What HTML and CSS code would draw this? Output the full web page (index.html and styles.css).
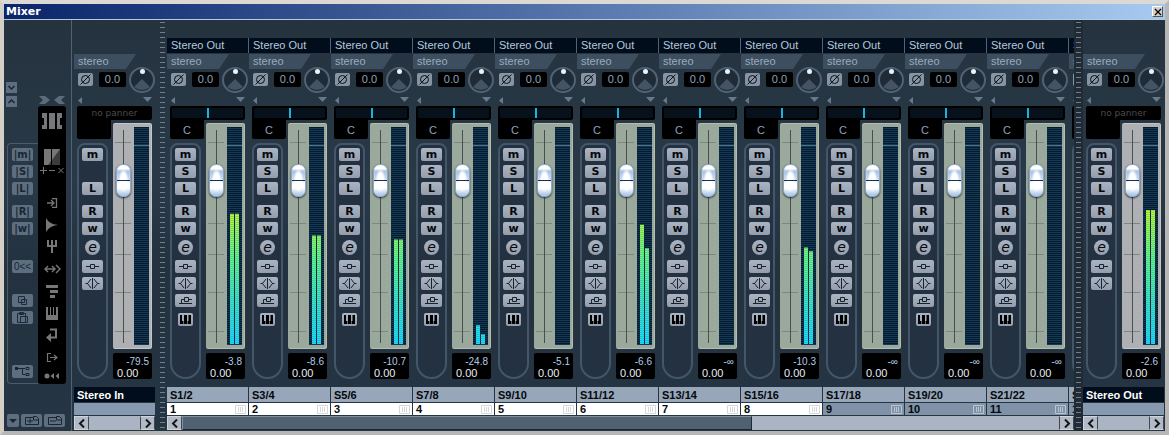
FILE: index.html
```html
<!DOCTYPE html>
<html lang="en">
<head>
    <meta charset="UTF-8">
    <meta name="viewport" content="width=device-width, initial-scale=1.0">
    <title>Mixer</title>
    <link rel="stylesheet" href="styles.css">
</head>
<body>
    <!-- Shared icons -->
    <svg class="icon-defs" aria-hidden="true">
        <symbol id="i-phase" viewBox="0 0 15 13"><circle cx="7.500" cy="6.500" r="4" fill="none" stroke="currentColor"/><path d="M2.500 11.500L12.500 1.500" stroke="currentColor"/></symbol>
        <symbol id="i-insert" viewBox="0 0 21 13"><path d="M4 6.500h4.500m4 0H17M8.500 4.500h4v4h-4z" fill="none" stroke="currentColor"/></symbol>
        <symbol id="i-eq" viewBox="0 0 21 13"><path d="M3.500 6.500h2.500m9 0h2.500M10.500 1v11M9 2L5.500 6.500L9 11M12 2l3.500 4.500L12 11" fill="none" stroke="currentColor"/></symbol>
        <symbol id="i-send" viewBox="0 0 21 13"><path d="M4 9.500h13M6.500 9V5.500H9m4 0h4M9.500 3.500h4v4h-4z" fill="none" stroke="currentColor"/></symbol>
        <symbol id="i-keys" viewBox="0 0 15 13"><path d="M2 2h2v6h2V2h3v6h1V2h3v9H2z" fill="#000"/><path d="M5.500 8v3M9.500 8v3" stroke="#a3adbb" stroke-width=".6"/><path d="M4 2h1.500v6H4zM9 2h1.500v6H9z" fill="#a3adbb"/></symbol>
        <symbol id="i-grid" viewBox="0 0 11 9"><path d="M.5 .5h10v8H.5zM3.500 2v5M5.500 2v5M7.500 2v5" fill="none" stroke="currentColor"/></symbol>
        <symbol id="i-left" viewBox="0 0 8 9"><path d="M6 .5L2 4.500L6 8.500" fill="none" stroke="currentColor" stroke-width="2"/></symbol>
        <symbol id="i-right" viewBox="0 0 8 9"><path d="M2 .5L6 4.500L2 8.500" fill="none" stroke="currentColor" stroke-width="2"/></symbol>
    </svg>

    <div class="window">
        <header class="titlebar">
            <h1>Mixer</h1>
            <button class="close" aria-label="Close"><svg width="8" height="8" viewBox="0 0 8 8"><path d="M1 1l6 6M7 1L1 7" stroke="#000" stroke-width="1.200"/></svg></button>
        </header>

        <main class="mixer">
            <!-- Common panel -->
            <aside class="common">
                <div class="common-main">
                    <div class="common-left">
                        <button class="mini" aria-label="Collapse"><svg width="11" height="11" viewBox="0 0 11 11"><path d="M2.500 4l3 3l3-3" fill="none" stroke="#1a2530" stroke-width="1.500"/></svg></button>
                        <button class="mini" aria-label="Expand"><svg width="11" height="11" viewBox="0 0 11 11"><path d="M2.500 7l3-3l3 3" fill="none" stroke="#1a2530" stroke-width="1.500"/></svg></button>
                        <div class="global">
                            <button class="dim">|m|</button>
                            <button class="dim">|S|</button>
                            <button class="dim">|L|</button>
                            <button class="dim gap-m">|R|</button>
                            <button class="dim">|w|</button>
                            <button class="dim reset gap-xl">0&lt;&lt;</button>
                            <button class="dim gap-l" aria-label="Copy"><svg width="21" height="13" viewBox="0 0 21 13"><path d="M6.500 2.500h6v6h-6zM9.500 5.500h5v5h-5z" fill="#5c6e80" stroke="#1e2a36"/></svg></button>
                            <button class="dim" aria-label="Paste"><svg width="21" height="13" viewBox="0 0 21 13"><path d="M5.500 2.500h8v9h-8zM7.500 1.500h4v2h-4zM8.500 5.500h7v6h-7z" fill="#5c6e80" stroke="#1e2a36"/></svg></button>
                            <button class="dim gap-route" aria-label="Routing"><svg width="21" height="13" viewBox="0 0 21 13"><path d="M4 3.500h9M10.500 3.500v6h3M14 2.500h3v2h-3zM14 8.500h3v2h-3z" fill="none" stroke="#1a2530"/><path d="M3 2h3v3H3z" fill="#1a2530"/></svg></button>
                        </div>
                    </div>
                    <div class="common-right">
                        <svg class="chevrons" width="28" height="8" viewBox="0 0 28 8"><path d="M1 0h6l5 4l-5 4H1l4-4zM27 0h-6l-5 4l5 4h6l-4-4z" fill="#5d6c7b"/></svg>
                        <nav class="views">
                            <button aria-label="Channels"><svg width="22" height="16" viewBox="0 0 22 16"><path d="M1 0h5v16H1v-4h2V5H1zM8 0h6v16H8zM16 0h5v5h-2v7h2v4h-5z" fill="#77777a"/></svg></button>
                            <button class="split" aria-label="Meter view"><svg width="16" height="16" viewBox="0 0 16 16"><path d="M0 0h7v16H0zM8 0h8v16H8z" fill="#3c3c3c"/><path d="M0 0h7v12l-3 4H0zM8 0h8L8 11z" fill="#777"/></svg></button>
                            <button class="short" aria-label="Strip size"><svg width="24" height="8" viewBox="0 0 24 8"><path d="M0 4.500h7M3.500 1v7M9 4.500h6M18.500 2l5 5M23.500 2l-5 5" stroke="#77777a"/></svg></button>
                            <button class="gap-views" aria-label="Input"><svg width="12" height="10" viewBox="0 0 12 10"><path d="M1 5h6M5 2l3 3l-3 3M6 .5h4.500v9H6" fill="none" stroke="#77777a" stroke-width="1.300"/></svg></button>
                            <button aria-label="Inserts"><svg width="14" height="14" viewBox="0 0 14 14"><path d="M1 0q3 6 12 7q-9 1-12 7z" fill="#77777a"/></svg></button>
                            <button aria-label="Equalizer"><svg width="12" height="14" viewBox="0 0 12 14"><path d="M1 0h2v5h2V0h2v5h2V0h2v7H7v6H5V7H1z" fill="#77777a"/></svg></button>
                            <button aria-label="Sends"><svg width="17" height="10" viewBox="0 0 17 10"><path d="M1 5h10M4 2L1 5l3 3M8 2l3 3l-3 3M12 1l4 4l-4 4" fill="none" stroke="#77777a" stroke-width="1.400"/></svg></button>
                            <button aria-label="Overview"><svg width="13" height="13" viewBox="0 0 13 13"><path d="M0 0h12v3H0zM4 5h8v3H4zM4 10h5v3H4z" fill="#77777a"/></svg></button>
                            <button aria-label="Instrument"><svg width="12" height="13" viewBox="0 0 12 13"><path d="M0 0h2v8h2V0h1v8h2V0h1v8h2V0h2v13H0z" fill="#77777a"/></svg></button>
                            <button aria-label="Return"><svg width="12" height="14" viewBox="0 0 12 14"><path d="M4 1.500h6v8H4" fill="none" stroke="#77777a" stroke-width="2"/><path d="M5 5v9L0 9.500z" fill="#77777a"/></svg></button>
                            <button aria-label="Output"><svg width="12" height="9" viewBox="0 0 12 9"><path d="M5 .5H1.500v8H5M4 4.500h7M8 2l3 2.500L8 7" fill="none" stroke="#77777a" stroke-width="1.200"/></svg></button>
                            <button class="low" aria-label="Rewind"><svg width="16" height="6" viewBox="0 0 16 6"><circle cx="3" cy="3" r="2.500" fill="#77777a"/><path d="M10 0v6L6.500 3zM15 0v6l-3.500-3z" fill="#77777a"/></svg></button>
                        </nav>
                    </div>
                </div>
                <div class="common-foot">
                    <button class="dim presets" aria-label="Presets"><svg width="12" height="13" viewBox="0 0 12 13"><path d="M2 5h8l-4 4z" fill="#1a2530"/></svg></button>
                    <button class="dim" aria-label="Store view"><svg width="21" height="13" viewBox="0 0 21 13"><path d="M4.500 3.500h8v-1h3l2 2v6h-13zM12.500 3v3h5M6 7h6M9 4.500v5" fill="none" stroke="#1a2530"/></svg></button>
                    <button class="dim" aria-label="Remove view"><svg width="21" height="13" viewBox="0 0 21 13"><path d="M4.500 3.500h8v-1h3l2 2v6h-13zM12.500 3v3h5M6 7h6" fill="none" stroke="#1a2530"/></svg></button>
                </div>
            </aside>

            <section class="bank bus" id="inputs" aria-label="Inputs"></section>
            <div class="divider"></div>
            <section class="bank channels" id="channels" aria-label="Channels"></section>
            <div class="divider wide"></div>
            <section class="bank bus" id="outputs" aria-label="Outputs"></section>
        </main>
    </div>
    <script src="mixer.js"></script>
</body>
</html>
```
FILE: styles.css
```css
* {
    box-sizing: border-box;
}

body {
    margin: 0;
    background: #25323f;
    font-family: "Liberation Sans", Arial, sans-serif;
    font-size: 11px;
    color: #a9bbcf;
    overflow: hidden;
}

button, input, select {
    margin: 0;
    padding: 0;
    border: 0;
    font: inherit;
    color: inherit;
}

svg {
    display: block;
    flex: none;
}

.icon-defs {
    display: none;
}

/* Window frame */
.window {
    display: flex;
    flex-direction: column;
    min-height: 100vh;
    border: 4px solid #d4d0c8;
    border-top-color: #dcd8d4;
    border-right-color: #b8b6b4;
    border-bottom-color: #b8b6b4;
}

.titlebar {
    display: flex;
    align-items: center;
    justify-content: space-between;
    height: 16px;
    padding: 0 2px;
    background: linear-gradient(90deg, #0a246a, #a6caf0);
    border-bottom: 1px solid #b4cbe4;
}

.titlebar h1 {
    margin: 0;
    font: bold 11px/15px "DejaVu Sans", Verdana, sans-serif;
    color: #fff;
}

.close {
    display: grid;
    place-items: center;
    width: 11px;
    height: 11px;
    background: #d4d0c8;
    border: 1px solid #fff;
    border-right-color: #555;
    border-bottom-color: #555;
}

.mixer {
    flex: 1;
    display: flex;
    background: linear-gradient(#25333f, #293947 40%, #243240 60%, #263543);
}

/* Common panel */
.common {
    display: flex;
    flex-direction: column;
    width: 68px;
    padding: 0 5px 4px 2px;
    border-right: 1px solid #526272;
}

.common-main {
    flex: 1;
    display: flex;
    padding-bottom: 30px;
}

.common-left {
    flex: 1;
    display: flex;
    flex-direction: column;
    gap: 3px;
    padding-top: 62px;
}

.mini {
    width: 11px;
    height: 11px;
    background: #5c6e80;
}

.global {
    flex: 1;
    display: flex;
    flex-direction: column;
    gap: 4px;
    margin: 33px 0 0 1px;
    padding: 4px;
    border: 1px solid #4a5b6c;
    border-right: 0;
    border-radius: 4px 0 0 4px;
}

.dim {
    width: 21px;
    height: 13px;
    background: #5c6e80;
    border-radius: 2px;
    color: #1a2632;
    font: bold 10px/13px "DejaVu Sans", Verdana, sans-serif;
}

.dim.reset {
    font: 10px/13px "Liberation Sans", Arial, sans-serif;
}

.gap-m {
    margin-top: 6px;
}

.gap-l {
    margin-top: 17px;
}

.gap-xl {
    margin-top: 21px;
}

.gap-route {
    margin-top: 37px;
}

.common-right {
    width: 28px;
    display: flex;
    flex-direction: column;
    gap: 2px;
    padding-top: 76px;
}

.views {
    flex: 1;
    padding-top: 4px;
    background: #000;
    border-radius: 3px;
}

.views button {
    display: grid;
    place-items: center;
    width: 28px;
    height: 22px;
    background: none;
}

.views .split {
    margin-top: 14px;
}

.views .short {
    height: 8px;
    margin-top: -2px;
}

.views .gap-views {
    margin-top: 18px;
}

.views .low {
    height: 16px;
}

.common-foot {
    display: flex;
    gap: 2px;
    padding-left: 1px;
}

.common-foot .presets {
    width: 12px;
}

/* Dividers with tick marks */
.divider {
    width: 8px;
    padding: 2px 2px 0 1px;
    margin-left: 4px;
}

.divider::before {
    content: "";
    display: block;
    height: 100%;
    background: repeating-linear-gradient(#6f7f8e 0 1px, transparent 1px 5px);
}

.divider.wide {
    width: 9px;
    margin: 0;
    padding: 2px 2px 0;
    background: #202b36;
}

/* Banks of strips */
.bank {
    display: flex;
    flex-direction: column;
}

.bus {
    width: 81px;
    flex: none;
}

#inputs {
    margin-left: 2px;
}

#outputs {
    margin-right: 1px;
}

.channels {
    flex: 1;
    min-width: 0;
}

.strips {
    flex: 1;
    display: flex;
    gap: 1px;
    overflow: hidden;
}

.strip {
    flex: none;
    width: 81px;
    display: flex;
    flex-direction: column;
    padding-top: 18px;
}

.route {
    appearance: none;
    height: 15px;
    padding-left: 4px;
    border-radius: 0;
    color: #b5cadf;
    line-height: 15px;
}

.channels .route {
    background: #020d1b;
    box-shadow: 1px 0 #536373;
}

/* Input section */
.input {
    display: grid;
    grid-template-columns: 55px 26px;
    grid-template-rows: 13px 26px;
    margin-top: 1px;
}

.tab {
    grid-area: 1 / 1 / 2 / 3;
    width: 62px;
    height: 15px;
    padding-left: 4px;
    line-height: 15px;
    background: #3d4e5e;
    clip-path: polygon(0 0, 100% 0, 84% 100%, 0 100%);
    color: #9aacc0;
}

.gain {
    display: flex;
    align-items: center;
    gap: 6px;
    padding: 0 0 2px 4px;
}

.phase {
    width: 15px;
    height: 13px;
    background: #8794a3;
    border-radius: 2px;
    color: #0a1118;
}

.gain input {
    width: 27px;
    height: 15px;
    background: #000;
    border-radius: 2px;
    text-align: center;
    color: #8fa4bc;
}

.knob {
    grid-area: 2 / 2;
    z-index: 1;
}

.arrows {
    display: flex;
    justify-content: space-between;
    height: 6px;
    margin: 4px 3px 3px 4px;
}

/* Panner */
.panner {
    display: flex;
    align-items: center;
    justify-content: center;
    height: 14px;
    margin: 0 3px;
    background: #000;
    border-radius: 2px 2px 2px 0;
    font: 9px/14px "DejaVu Sans", Verdana, sans-serif;
    color: #4c4d4f;
}

.pan-field {
    flex: 1;
    height: 10px;
    margin: 0 2px;
    background: linear-gradient(#19b4d8, #19b4d8) center / 2px 10px no-repeat #07111c;
}

.lower {
    flex: 1;
    display: grid;
    grid-template-columns: 36px 39px;
    padding: 0 3px 8px;
}

.left-col, .right-col {
    display: flex;
    flex-direction: column;
}

.pan-value {
    width: 34px;
    height: 19px;
    background: #000;
    border-radius: 0 0 2px 2px;
    text-align: center;
    line-height: 20px;
    color: #8ea3bc;
}

.capsule {
    flex: 1;
    display: flex;
    flex-direction: column;
    align-items: center;
    gap: 4px;
    width: 31px;
    margin-top: 4px;
    padding-top: 3px;
    border: 2px solid #43566a;
    border-radius: 8px 8px 16px 16px;
    background: #233140;
}

.key {
    width: 21px;
    height: 13px;
    background: linear-gradient(#aab4c2, #939dab);
    border-radius: 2px;
    color: #05080c;
    font: bold 11px/12px "DejaVu Sans", Verdana, sans-serif;
}

.key.empty {
    visibility: hidden;
}

.key.read {
    margin-top: 6px;
}

.key.icon {
    color: #18222d;
}

.key.edit {
    width: 15px;
    height: 15px;
    margin: 1px 0;
    border-radius: 50%;
    font: italic 14px/13px "DejaVu Sans", Verdana, sans-serif;
}

.key.midi {
    width: 15px;
    margin-top: 2px;
}

/* Fader and meter */
.right-col {
    padding-top: 3px;
    gap: 4px;
}

.fader-panel {
    flex: 1;
    display: flex;
    justify-content: space-between;
    padding: 4px 3px 4px 2px;
    border-radius: 2px;
    background:
        linear-gradient(#7b887d, #7b887d) 2px 19px / 16px 1px no-repeat,
        linear-gradient(#7b887d, #7b887d) 2px 100px / 16px 1px no-repeat,
        linear-gradient(#7b887d, #7b887d) 2px 131px / 16px 1px no-repeat,
        linear-gradient(#7b887d, #7b887d) 2px 169px / 16px 1px no-repeat,
        linear-gradient(#7b887d, #7b887d) 2px 208px / 16px 1px no-repeat,
        #9ba99d;
    box-shadow: inset -1px -1px #b3bdb2, inset 0 1px #b3bdb2;
}

.bus .fader-panel {
    background-color: #aeb0b3;
    box-shadow: inset -1px -1px #c4c6c8, inset 0 1px #c4c6c8;
}

.fader {
    appearance: none;
    writing-mode: vertical-lr;
    direction: rtl;
    width: 17px;
    height: 213px;
    margin-top: 3px;
    background: linear-gradient(#46504c, #46504c) center / 1px 100% no-repeat;
}

.fader::-webkit-slider-thumb {
    appearance: none;
    width: 15px;
    height: 33px;
    border: 1px solid #8ea6c4;
    border-radius: 7px;
    background:
        linear-gradient(#14304e, #14304e) 0 15px / 100% 1px no-repeat,
        radial-gradient(5px 12px at 50% 50%, #fff 60%, #fff0),
        linear-gradient(#fff 0 12%, #a9c3e4 20%, #c9dcf2 45%, #fff 60% 74%, #b4cdea 94%);
    box-shadow: 0 1px 2px #26303a;
}

.meter {
    display: flex;
    gap: 1px;
    justify-content: center;
    width: 15px;
    background:
        linear-gradient(#4d7288, #4d7288) 0 18px / 100% 1px no-repeat,
        repeating-linear-gradient(#071a2c 0 1px, #123a58 1px 2px);
}

.bar {
    width: 4px;
    margin-bottom: 1px;
    clip-path: inset(calc(100% - var(--level)) 0 0 0);
    background:
        repeating-linear-gradient(#0000 0 1px, #0b3a3a2e 1px 2px),
        linear-gradient(#f4f840, #b4f83c 40%, #62f88c 60%, #38e4d0 82%, #1cdcff);
}

.readout {
    display: flex;
    flex-direction: column;
    height: 26px;
    padding: 3px 3px 0 4px;
    background: #000;
    border-radius: 2px;
}

.peak {
    align-self: flex-end;
    font-size: 10px;
    line-height: 11px;
    color: #b0cbe8;
}

.readout input {
    width: 26px;
    height: 11px;
    background: none;
    color: #e4ecf4;
}

/* Names and numbers */
.name, .number {
    padding-left: 3px;
    font-weight: bold;
    color: #05080c;
}

.name {
    height: 15px;
    line-height: 16px;
    background: #97a6b8;
}

.number {
    display: flex;
    align-items: center;
    justify-content: space-between;
    height: 12px;
    margin: 1px 0;
    padding-right: 2px;
    background: #7f92a7;
    line-height: 12px;
}

.number svg {
    color: #bcc6d0;
}

.armed .number {
    background: #fff;
}

.armed .number svg {
    color: #d4d6da;
}

.bus .name {
    background: #020d1b;
    color: #fff;
}

.bus .number {
    background: #8799ae;
}

/* Scrollbars */
.scroll {
    display: flex;
    height: 14px;
    margin-bottom: 1px;
    background: #aab4c3;
}

.scroll button {
    display: grid;
    place-items: center;
    width: 15px;
    background: #b2bac5;
    border: 1px solid #d0d5dc;
    border-right-color: #3c4855;
    color: #10161c;
}

.scroll button:last-child {
    border-left-color: #3c4855;
}

.track {
    flex: 1;
}

.thumb {
    width: 65%;
    height: 100%;
    background: #506171;
    border: 1px solid #8090a0;
    border-right-color: #1d2833;
    border-bottom-color: #1d2833;
}
```
FILE: mixer.js
```js
const channels = [
    { name: 'S1/2', peak: '-3.8', levels: [132, 132] },
    { name: 'S3/4', peak: '-8.6', levels: [110, 110] },
    { name: 'S5/6', peak: '-10.7', levels: [106, 106] },
    { name: 'S7/8', peak: '-24.8', levels: [19, 10] },
    { name: 'S9/10', peak: '-5.1', levels: [0, 0] },
    { name: 'S11/12', peak: '-6.6', levels: [121, 97] },
    { name: 'S13/14', peak: '-∞', levels: [0, 0] },
    { name: 'S15/16', peak: '-10.3', levels: [98, 94] },
    { name: 'S17/18', peak: '-∞', levels: [0, 0] },
    { name: 'S19/20', peak: '-∞', levels: [0, 0] },
    { name: 'S21/22', peak: '-∞', levels: [0, 0] },
    { name: 'S23/24', peak: '-∞', levels: [0, 0] }
];
const METER_STEPS = 220;

function icon(id, w, h) {
    return `<svg width="${w}" height="${h}"><use href="#${id}"/></svg>`;
}

function strip(ch, i, bus) {
    const bars = ch.levels.map(v => `<div class="bar" style="--level: ${(v / METER_STEPS * 100).toFixed(1)}%"></div>`).join('');
    const solo = ch.noSolo ? '<span class="key empty"></span>' : '<button class="key">S</button>';
    return `
    <article class="strip ${!bus && i < 8 ? 'armed' : ''}">
        ${bus ? '<div class="route"></div>' : `<select class="route" aria-label="${ch.name} output"><option>Stereo Out</option></select>`}
        <div class="input">
            <div class="tab">stereo</div>
            <div class="gain">
                <button class="phase" aria-label="Phase">${icon('i-phase', 15, 13)}</button>
                <input type="text" value="0.0" aria-label="${ch.name} gain">
            </div>
            <svg class="knob" width="26" height="26" viewBox="0 0 26 26">
                <circle cx="13" cy="13" r="12" fill="#1f2b37" stroke="#506274" stroke-width="2"/>
                <path d="M13 12l8 8q-8 6-16 0z" fill="#455463"/>
                <circle cx="13.500" cy="4.500" r="2.500" fill="#e8f2fb"/>
            </svg>
        </div>
        <div class="arrows">
            <svg width="4" height="7" viewBox="0 0 4 7"><path d="M4 0v7L0 3.500z" fill="#68798a"/></svg>
            <svg width="9" height="5" viewBox="0 0 9 5"><path d="M0 0h9L4.500 5z" fill="#68798a"/></svg>
        </div>
        <div class="panner">${bus ? 'no panner' : '<div class="pan-field"></div>'}</div>
        <div class="lower">
            <div class="left-col">
                <div class="pan-value">${bus ? '' : 'C'}</div>
                <div class="capsule">
                    <button class="key">m</button>
                    ${solo}
                    <button class="key">L</button>
                    <button class="key read">R</button>
                    <button class="key">w</button>
                    <button class="key edit">e</button>
                    <button class="key icon" aria-label="Inserts">${icon('i-insert', 21, 13)}</button>
                    <button class="key icon" aria-label="Equalizer">${icon('i-eq', 21, 13)}</button>
                    ${bus ? '' : `<button class="key icon" aria-label="Sends">${icon('i-send', 21, 13)}</button>
                    <button class="key midi" aria-label="Instrument">${icon('i-keys', 15, 13)}</button>`}
                </div>
            </div>
            <div class="right-col">
                <div class="fader-panel">
                    <input class="fader" type="range" min="0" max="180" value="146" aria-label="${ch.name} level">
                    <div class="meter">${bars}</div>
                </div>
                <div class="readout">
                    <span class="peak">${ch.peak}</span>
                    <input type="text" value="0.00" aria-label="${ch.name} volume">
                </div>
            </div>
        </div>
        <div class="name">${ch.name}</div>
        <div class="number">${bus ? '' : `${i + 1}${icon('i-grid', 11, 9)}`}</div>
    </article>`;
}

function fillBank(id, list, bus) {
    document.getElementById(id).innerHTML = `
        <div class="strips">${list.map((ch, i) => strip(ch, i, bus)).join('')}</div>
        <div class="scroll">
            <button aria-label="Scroll left">${icon('i-left', 8, 9)}</button>
            <div class="track">${bus ? '' : '<div class="thumb"></div>'}</div>
            <button aria-label="Scroll right">${icon('i-right', 8, 9)}</button>
        </div>`;
}

fillBank('inputs', [{ name: 'Stereo In', peak: '-79.5', levels: [0, 0], noSolo: true }], true);
fillBank('channels', channels, false);
fillBank('outputs', [{ name: 'Stereo Out', peak: '-2.6', levels: [136, 136] }], true);
```
